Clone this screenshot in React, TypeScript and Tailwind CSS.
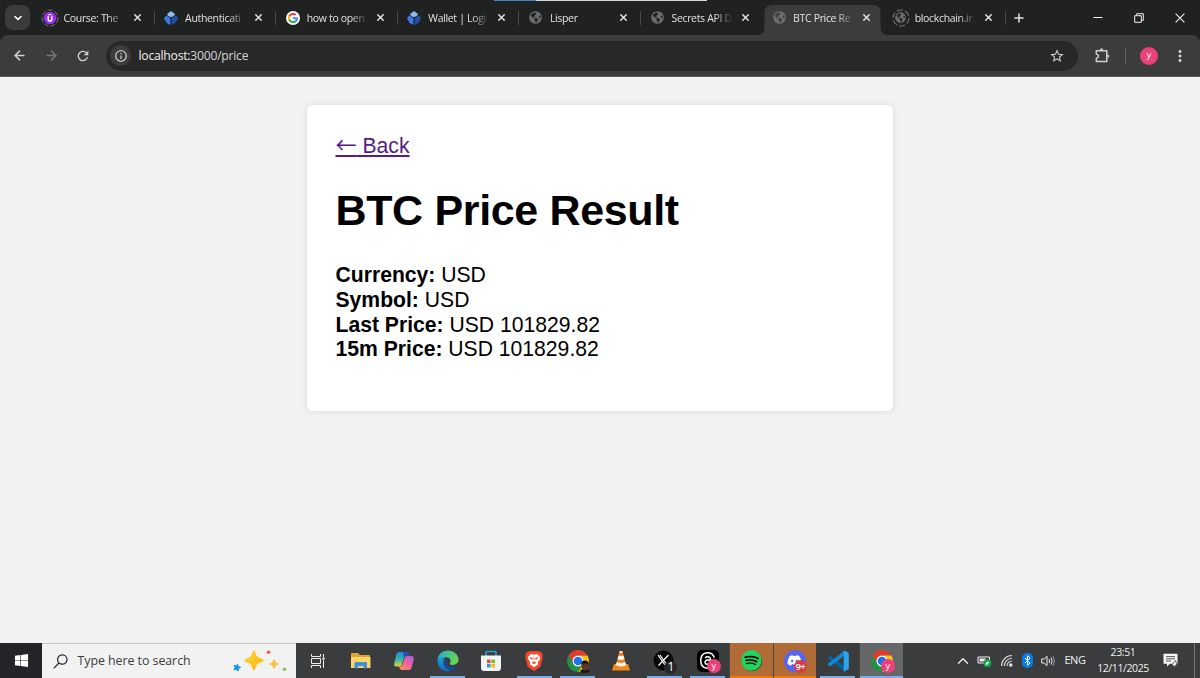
import type { ReactNode } from "react";
import { clsx } from "clsx";
import { ArrowLeft, ArrowRight, ChevronDown, ChevronUp, Plus, X } from "lucide-react";
import { FaDiscord, FaGlobeAmericas, FaSpotify, FaWindows } from "react-icons/fa";
import { MdInfoOutline, MdMoreVert, MdRefresh, MdStarOutline } from "react-icons/md";
import { SiThreads } from "react-icons/si";

const UdemyIcon = () => (
	<svg viewBox="0 0 18 18" className="size-[18px]">
		<circle cx="9" cy="9" r="8" fill="none" stroke="#77767a" strokeWidth="1" strokeDasharray="5 2" />
		<circle cx="9" cy="9" r="6.3" fill="#9b2ff0" />
		<path d="M7.2 7.2v3.1c0 2.4 3.6 2.4 3.6 0V7.2" fill="none" stroke="#fff" strokeWidth="1.5" />
		<path d="M7.1 6.3 9 5.2l1.9 1.1" fill="none" stroke="#fff" strokeWidth="1" />
	</svg>
);

const BlockchainIcon = () => (
	<svg viewBox="0 0 16 16" className="size-4">
		<path d="M4 4 8 .9 12 4l-1.2 2L8 7.2 5.2 6z" fill="#93b8ee" />
		<path d="M3.2 5.2.9 8.6 4 13.200l3.400 1.800V8.300z" fill="#3b78e4" />
		<path d="m12.800 5.200 2.300 3.400-3.100 4.600-3.400 1.800V8.300z" fill="#1f4fa5" />
	</svg>
);

const GoogleIcon = () => (
	<svg viewBox="0 0 48 48" className="size-[14px]">
		<circle cx="24" cy="24" r="24" fill="#fff" />
		<g transform="translate(6.5 6.5) scale(.73)">
			<path fill="#ea4335" d="M24 9.5c3.5 0 6.7 1.2 9.2 3.6l6.9-6.9C35.9 2.4 30.5 0 24 0 14.6 0 6.5 5.4 2.6 13.2l8 6.2C12.4 13.7 17.7 9.5 24 9.5z" />
			<path fill="#4285f4" d="M47 24.6c0-1.6-.2-3.1-.4-4.600H24v9h12.900c-.6 3-2.200 5.500-4.800 7.200l7.700 6c4.500-4.200 7.200-10.400 7.200-17.600z" />
			<path fill="#fbbc05" d="M10.500 28.600c-.5-1.500-.8-3-.8-4.600s.3-3.100.8-4.600l-8-6.200C.9 16.500 0 20.100 0 24s.9 7.500 2.600 10.800z" />
			<path fill="#34a853" d="M24 48c6.500 0 11.900-2.100 15.900-5.800l-7.700-6c-2.200 1.500-4.900 2.300-8.200 2.300-6.300 0-11.600-4.200-13.500-9.900l-8 6.200C6.500 42.600 14.600 48 24 48z" />
		</g>
	</svg>
);

const Globe = () => <FaGlobeAmericas className="size-[13px] text-[#6b6c6d]" />;

const LoadingGlobe = () => (
	<span className="relative flex size-[18px] items-center justify-center">
		<FaGlobeAmericas className="size-[11px] text-[#6b6c6d]" />
		<svg viewBox="0 0 18 18" className="absolute inset-0 size-[18px]">
			<circle cx="9" cy="9" r="8" fill="none" stroke="#707172" strokeWidth="1.2" strokeDasharray="6 2.3" />
		</svg>
	</span>
);

const tabs = [
	{ title: "Course: The", icon: <UdemyIcon /> },
	{ title: "Authenticati", icon: <BlockchainIcon /> },
	{ title: "how to open", icon: <GoogleIcon /> },
	{ title: "Wallet | Logi", icon: <BlockchainIcon /> },
	{ title: "Lisper", icon: <Globe /> },
	{ title: "Secrets API D", icon: <Globe /> },
	{ title: "BTC Price Re", icon: <Globe />, active: true },
	{ title: "blockchain.ir", icon: <LoadingGlobe /> },
];

const Tab = ({ title, icon, active, divider }: { title: string; icon: ReactNode; active?: boolean; divider: boolean }) => (
	<div className="relative flex h-[35px] w-[121.600px] shrink-0 items-center pl-[7.500px]">
		{active && (
			<svg className="absolute top-[5px] -left-[6px] h-[30px] w-[132px]" viewBox="0 0 132 30">
				<path d="M0 30Q7.500 30 7.500 22V8Q7.500 0 15.500 0H115.500Q123.500 0 123.500 8V22Q123.500 30 131.500 30Z" fill="#3c3c3c" />
			</svg>
		)}
		<span className="relative flex w-[18px] justify-center">{icon}</span>
		<span className="mt-[2px] ml-[5px] w-[62px] text-[10.500px] tracking-[-0.330px] whitespace-nowrap text-[#dfe1e1] [mask-image:linear-gradient(to_right,black_70%,transparent_100%)]">
			{title}
		</span>
		<X className="relative ml-[6.200px] size-[11px] text-[#e0e1e1]" strokeWidth={3.2} />
		{divider && <span className="absolute right-0 h-[14px] w-px bg-[#484b4a]" />}
	</div>
);

const TabStrip = () => (
	<div className="relative flex h-[35px] items-center bg-[#1f2221]">
		<div className="absolute top-0 left-[494px] flex h-px w-[213px] bg-[#d5dcda]">
			<span className="w-[42px] bg-[#3d82c4]" />
		</div>
		<button className="ml-[5px] flex h-[25px] w-[25px] items-center justify-center rounded-[8px] bg-[#3a3c3b]">
			<ChevronDown className="size-[12px] text-white" strokeWidth={3.2} />
		</button>
		<div className="ml-[3px] flex">
			{tabs.map((tab, i) => (
				<Tab key={tab.title} {...tab} divider={i !== 5 && i !== 6} />
			))}
		</div>
		<Plus className="ml-[6.500px] size-[14px] text-[#e0e1e1]" strokeWidth={2.6} />
		<div className="ml-auto flex items-center text-[#f0f0f0]">
			<svg viewBox="0 0 10 10" className="mr-[31px] size-[10px]">
				<path d="M.5 4.500h9" stroke="currentColor" />
			</svg>
			<svg viewBox="0 0 10 10" className="mr-[31px] size-[10px]" fill="none" stroke="currentColor">
				<path d="M.7 2.700h6.600v6.600H.7z" />
				<path d="M2.700 2.400V.7h6.600v6.600H7.500" />
			</svg>
			<svg viewBox="0 0 10 10" className="mr-[15px] size-[10px]" stroke="currentColor" strokeWidth="1.1">
				<path d="m.6.6 8.800 8.800M9.400.6.6 9.400" />
			</svg>
		</div>
	</div>
);

const Toolbar = () => (
	<div className="bg-[#1f2221]">
		<div className="flex h-[42px] items-center rounded-t-[8px] border-b border-[#5a5a5a] bg-[#3c3c3c] text-[#cfcfcf]">
			<ArrowLeft className="ml-[12px] size-[15px]" strokeWidth={2.3} />
			<ArrowRight className="ml-[17px] size-[15px] text-[#777]" strokeWidth={2.3} />
			<MdRefresh className="ml-[16px] size-[16px]" />
			<div className="ml-[15px] flex h-[30px] w-[972px] items-center rounded-full bg-[#282828]">
				<span className="ml-[4px] flex size-[21px] items-center justify-center rounded-full bg-[#3c3c3c]">
					<MdInfoOutline className="size-[14px] text-[#d8d8d8]" />
				</span>
				<span className="mt-px ml-[7.500px] text-[12.200px] tracking-[-0.250px] text-[#d3d4d5]">
					<span className="text-[#eee]">localhost:</span>3000/price
				</span>
				<MdStarOutline className="mr-[13px] ml-auto size-[16px]" />
			</div>
			<svg viewBox="0 0 17 17" className="ml-[15.500px] size-[17px]" fill="none" stroke="currentColor" strokeWidth="1.5">
				<path d="M2.300 3.700h10.500v10.800H2.300v-3.200q2.200-.5 2.200-2.200T2.300 6.900z" strokeLinejoin="round" />
				<path d="M6 3.200q0-2 1.600-2t1.600 2zM13.300 7.500q2 0 2 1.600t-2 1.600z" fill="currentColor" stroke="none" />
			</svg>
			<span className="ml-[14px] h-[14px] w-px bg-[#646464]" />
			<span className="ml-[14.500px] flex size-[18px] items-center justify-center rounded-full bg-[#ec407a] text-[9.500px] text-white">
				y
			</span>
			<MdMoreVert className="ml-[13px] size-[18px]" />
		</div>
	</div>
);

const prices = [
	["Currency", "USD"],
	["Symbol", "USD"],
	["Last Price", "USD 101829.82"],
	["15m Price", "USD 101829.82"],
];

const PricePage = () => (
	<main className="flex-1 bg-[#f2f2f2] pt-[28px] font-['Liberation_Sans',Arial,sans-serif] text-[21.150px] leading-[24.700px] text-black">
		<div className="mx-auto h-[306px] w-[586px] rounded-[6px] bg-white px-[28.500px] pt-[28px] shadow-[0_0_7px_rgba(0,0,0,0.1)]">
			<a href="#" className="text-[#551a8b] underline">
				<span className="font-['Noto_Sans_CJK_JP',sans-serif] leading-none">←</span> Back
			</a>
			<h1 className="mt-[27px] text-[43px] leading-[49px] font-bold tracking-[-0.350px]">BTC Price Result</h1>
			<div className="mt-[28.500px]">
				{prices.map(([label, value]) => (
					<p key={label}>
						<strong>{label}:</strong> {value}
					</p>
				))}
			</div>
		</div>
	</main>
);

const Sparkles = () => (
	<svg viewBox="0 0 56 24" className="h-6 w-14">
		<defs>
			<linearGradient id="gold" x2="1" y2="1">
				<stop stopColor="#ffd64a" />
				<stop offset="1" stopColor="#f7b500" />
			</linearGradient>
		</defs>
		<path d="M22 1.500c1.500 0 2 4.500 3.200 5.900s6.500 2.400 6.500 4.100-5 2.200-6.500 3.800-1.700 5.900-3.200 5.900-2-4.400-3.400-5.900-6.500-2.100-6.500-3.800 5.100-2.600 6.500-4.100S20.500 1.500 22 1.500z" fill="url(#gold)" />
		<path d="m42 11 1.200 2.800L46 15l-2.800 1.200L42 19l-1.200-2.800L38 15l2.800-1.200z" fill="#fcc33c" stroke="#fcc33c" strokeWidth="1.300" strokeLinejoin="round" />
		<path d="m5.500 15.200.8 2.500 2.400.6-2.200 1.300-.3 2.500-1.800-1.600-2.500.300 1.200-2.200-1-2 2.400.3z" fill="#1597e5" stroke="#1597e5" strokeLinejoin="round" />
		<circle cx="36.500" cy="3.300" r="1.800" fill="#ef5a4c" />
		<circle cx="52.500" cy="20.300" r="1.800" fill="#8dbb60" />
	</svg>
);

const TaskViewIcon = () => (
	<svg viewBox="0 0 16 16" className="size-4" fill="none" stroke="#eee">
		<path d="M1.500 1v2.500h9V1M1.500 15v-2.500h9V15M1.500 5.500h9v5h-9zM13.500 1v3M13.500 7v8" />
		<path d="M12.300 5.500h2.400" strokeWidth="2" />
	</svg>
);

const ExplorerIcon = () => (
	<svg viewBox="0 0 20 18" className="h-[18px] w-5">
		<path d="M0 2a1 1 0 0 1 1-1h6l2 2h9a1 1 0 0 1 1 1v3H0z" fill="#e0a52c" />
		<path d="M0 5h19.500v11H0z" fill="#fbd56c" />
		<path d="M3.500 16.500V11q0-1 1-1h10.500q1 0 1 1v5.500h-3.500V14H7v2.500z" fill="#3f91d4" />
	</svg>
);

const CopilotIcon = () => (
	<svg viewBox="0 0 22 20" className="h-5 w-[22px]">
		<defs>
			<linearGradient id="copilot-left" x2="0" y2="1">
				<stop stopColor="#1f8de2" />
				<stop offset=".5" stopColor="#32b5a5" />
				<stop offset="1" stopColor="#e6d136" />
			</linearGradient>
			<linearGradient id="copilot-right" x1="1" x2="0" y2="1">
				<stop stopColor="#a55be8" />
				<stop offset=".5" stopColor="#f0649a" />
				<stop offset="1" stopColor="#fa9b4d" />
			</linearGradient>
		</defs>
		<path d="M6 1h7q2 0 2.500 2l.7 2h-2.700q-2 0-2.600 2l-2 6.500q-.6 2-2.600 2H3.500Q.6 15.500 1.300 12L3.500 3Q4 1 6 1z" fill="url(#copilot-left)" />
		<path d="M10 1h3q2 0 2.500 2l.7 2h-2.700q-2 0-2.600 2z" fill="#2450b8" />
		<path d="M16 19H9q-2 0-2.500-2l-.5-1.500h1q2 0 2.600-2l2-6.500q.6-2 2.600-2h4.300q2.900 0 2.200 3.500L18.500 17Q18 19 16 19z" fill="url(#copilot-right)" />
	</svg>
);

const EdgeIcon = () => (
	<svg viewBox="0 0 22 22" className="size-[22px]">
		<defs>
			<linearGradient id="edge-wave" x2="1" y2=".3">
				<stop stopColor="#25a9dc" />
				<stop offset="1" stopColor="#62d652" />
			</linearGradient>
			<linearGradient id="edge-blue" x2="0" y2="1">
				<stop stopColor="#1ba2df" />
				<stop offset="1" stopColor="#1265bb" />
			</linearGradient>
		</defs>
		<path d="M.5 11C.5 4.500 5.500.5 11 .5S21.500 4.500 21.500 9.500c0 4-3.500 5.500-6 5.500-2 0-3-1-2.500-2 1-1.500 1-4-1.500-5.200C8 6 2 7 .5 11z" fill="url(#edge-wave)" />
		<path d="M.5 11C1.500 7 5 6 8.500 7 6.500 8.500 6 11 6.500 13.500 7.500 18 11 20 14 21 7 23 .5 18 .5 11z" fill="url(#edge-blue)" />
		<path d="M8.500 9C5.500 13 8 19.500 14 21c2.800-.8 5-2.500 6.300-4.700-5.300 2.200-11.300-.3-10.300-5z" fill="#144c91" />
	</svg>
);

const StoreIcon = () => (
	<svg viewBox="0 0 22 22" className="size-[22px]">
		<path d="M6 6V2.500q0-1 1-1h8q1 0 1 1V6" fill="none" stroke="#21a3dc" strokeWidth="1.6" />
		<path d="M1 5.500h20V18q0 3-3 3H4q-3 0-3-3z" fill="#f2f3f5" />
		<path d="M7 9.500h3.600v3.600H7z" fill="#ef4e23" />
		<path d="M11.400 9.500H15v3.600h-3.600z" fill="#7db928" />
		<path d="M7 13.900h3.600v3.600H7z" fill="#20a1e5" />
		<path d="M11.400 13.900H15v3.600h-3.600z" fill="#fdb813" />
	</svg>
);

const BraveIcon = () => (
	<svg viewBox="0 0 20 22" className="h-[22px] w-5">
		<path d="m5 1.500 2-.5h6l2 .5 2 .5 1.700 2.500-.5 1.700.5 1.500-2.400 9L10 21.300 3.700 16.700l-2.400-9 .5-1.500-.5-1.700L3 2z" fill="#f4472c" />
		<path d="m7 4 3 .7L13 4l3.200 3-.7 3-1.700 2 .4 2.300-4.200 3-4.200-3L6.200 12l-1.700-2-.7-3z" fill="#fff" />
		<path d="m5.800 7.500 2.800.8-.7 1.300zM14.200 7.500l-2.800.8.7 1.300zM10 6.500v4M8 12.500l2-.7 2 .7-2 1.500z" fill="#f4472c" stroke="#f4472c" strokeWidth=".6" />
	</svg>
);

const ChromeIcon = () => (
	<svg viewBox="0 0 22 22" className="size-[22px]">
		<path d="M1.500 5.500A11 11 0 0 1 20.500 5.500H11A5.500 5.500 0 0 0 6.200 13.700z" fill="#e33b2e" />
		<path d="M20.500 5.500A11 11 0 0 1 11 22l4.800-8.300A5.500 5.500 0 0 0 11 5.500z" fill="#fbc116" />
		<path d="M11 22A11 11 0 0 1 1.500 5.500l4.700 8.200a5.500 5.500 0 0 0 9.600 0z" fill="#229342" />
		<circle cx="11" cy="11" r="5.500" fill="#fff" />
		<circle cx="11" cy="11" r="4.300" fill="#1a73e8" />
	</svg>
);

const ChromePersonIcon = () => (
	<span className="relative">
		<ChromeIcon />
		<svg viewBox="0 0 12 13" className="absolute -right-[2px] -bottom-px h-[13px] w-3">
			<path d="M1 10.500 4 9h4l3 1.500Q10 13 6 13t-5-2.500z" fill="#16181b" />
			<ellipse cx="6" cy="5.800" rx="3.600" ry="4.800" fill="#5b3727" />
			<path d="M2.200 5Q2 .5 6 .5T9.800 5L8 3.400H4z" fill="#17100f" />
		</svg>
	</span>
);

const VlcIcon = () => (
	<svg viewBox="0 0 20 22" className="h-[22px] w-5">
		<path d="M3 14h14l2 6.500H1z" fill="#f28a17" />
		<path d="M8.700 1h2.600l4.200 15.300Q10 19 4.500 16.300z" fill="#f58220" />
		<path d="m7.500 5.500-1 3.800q3.500 1.400 7 0l-1-3.800q-2.500 1-5 0zM5.800 12l-1 3.200q5.200 2.600 10.400 0l-1-3.200q-4.200 1.800-8.400 0z" fill="#f5f3f0" />
		<path d="M8.700 1h2.600l.4 1.800H8.300z" fill="#eee" />
	</svg>
);

const Badge = ({ children, className }: { children: ReactNode; className: string }) => (
	<span className={clsx("absolute flex items-center justify-center rounded-full leading-none text-white", className)}>{children}</span>
);

const XOneIcon = () => (
	<span className="relative size-[22px]">
		<svg viewBox="0 0 22 22" className="size-[22px]">
			<circle cx="10.500" cy="10.500" r="10" fill="#080808" />
			<path d="m5 5 7 10M7 5l7 10M15.500 5 5.500 15.500" stroke="#fff" strokeWidth="1.2" />
		</svg>
		<Badge className="-right-[2px] -bottom-[2px] size-[13px] bg-[#252628] text-[12px]">1</Badge>
	</span>
);

const ThreadsAppIcon = () => (
	<span className="relative flex size-[22px] items-center justify-center rounded-[5px] bg-black">
		<SiThreads className="size-[17px] text-white" />
		<Badge className="-right-[2px] -bottom-[1px] size-[14px] bg-[#ec407a] text-[9px]">y</Badge>
	</span>
);

const SpotifyIcon = () => (
	<span className="flex size-[20px] items-center justify-center rounded-full bg-black">
		<FaSpotify className="size-[21px] shrink-0 text-[#1ed760]" />
	</span>
);

const DiscordAppIcon = () => (
	<span className="relative flex size-[22px] items-center justify-center rounded-full bg-[#5865f2]">
		<FaDiscord className="mr-px size-[15px] text-white" />
		<Badge className="-right-[1px] -bottom-[1px] size-[13px] bg-[#d83c3e] text-[9px] font-semibold tracking-[-0.500px]">9+</Badge>
	</span>
);

const VsCodeIcon = () => (
	<svg viewBox="0 0 22 22" className="size-[22px]">
		<path d="m1 7.200 1.500-1.300q.6-.4 1.300.1L17 16v5L1.100 8.500q-.7-.6-.1-1.300z" fill="#0065a9" />
		<path d="m1 14.800 1.500 1.300q.6.4 1.300-.1L17 6V1L1.100 13.500q-.7.6-.1 1.300z" fill="#1387ce" />
		<path d="M16 .8q.8-.3 1.500 0l3.600 1.700q.7.400.7 1.200v14.600q0 .8-.7 1.200l-3.600 1.700q-.7.300-1.500 0 .7-.3.700-1.200V2q0-.9-.7-1.200z" fill="#27a5ed" />
	</svg>
);

const ChromeProfileIcon = () => (
	<span className="relative">
		<ChromeIcon />
		<Badge className="-right-[2px] -bottom-[1px] size-[14px] bg-[#ec407a] text-[9px]">y</Badge>
	</span>
);

type TaskbarApp = { name: string; icon: ReactNode; cell?: string; line?: string };

const apps: TaskbarApp[] = [
	{ name: "Task View", icon: <TaskViewIcon /> },
	{ name: "File Explorer", icon: <ExplorerIcon /> },
	{ name: "Copilot", icon: <CopilotIcon /> },
	{ name: "Edge", icon: <EdgeIcon />, line: "bg-[#76aeea]" },
	{ name: "Store", icon: <StoreIcon /> },
	{ name: "Brave", icon: <BraveIcon />, line: "bg-[#76aeea]" },
	{ name: "Chrome", icon: <ChromePersonIcon />, line: "bg-[#76aeea]" },
	{ name: "VLC", icon: <VlcIcon /> },
	{ name: "X", icon: <XOneIcon />, line: "bg-[#76aeea]" },
	{ name: "Threads", icon: <ThreadsAppIcon />, line: "bg-[#76aeea]" },
	{ name: "Spotify", icon: <SpotifyIcon />, cell: "bg-[#b16b36]", line: "bg-[#f5760c]" },
	{ name: "Discord", icon: <DiscordAppIcon />, cell: "bg-[#b16b36]", line: "bg-[#f5760c]" },
	{ name: "VS Code", icon: <VsCodeIcon />, line: "bg-[#76aeea]" },
	{ name: "Chrome profile", icon: <ChromeProfileIcon />, cell: "bg-[#666768]", line: "bg-[#76aeea]" },
];

const SystemTray = () => (
	<div className="ml-auto flex h-full items-center text-[#f0f0f0]">
		<ChevronUp className="size-[18px]" strokeWidth={1.7} />
		<svg viewBox="0 0 15 14" className="ml-[5px] h-[14px] w-[15px]">
			<path d="M1 3h11.500v6H1z" fill="none" stroke="#eee" />
			<path d="M2.500 4.500h6v3h-6z" fill="#eee" />
			<circle cx="10.300" cy="9.200" r="4" fill="#16a34a" />
			<path d="M8.500 10.700q0-3.300 3.500-3.300 0 3.700-3.500 3.300z" fill="#dff7e4" />
		</svg>
		<svg viewBox="0 0 14 14" className="ml-[8px] size-[14px]" fill="none" stroke="#ddd" strokeWidth="1.1">
			<path d="M1.500 12A10.500 10.500 0 0 1 12 1.500M4.200 12A8 8 0 0 1 12 4.200M7 12a5 5 0 0 1 5-5" />
			<circle cx="10.800" cy="11" r="1.200" fill="#eee" />
		</svg>
		<svg viewBox="0 0 11 15" className="ml-[8px] h-[15px] w-[11px]">
			<rect width="11" height="15" rx="5" fill="#0a7ce5" />
			<path d="m3 5 5 5-2.500 2.300V2.700L8 5l-5 5" fill="none" stroke="#fff" strokeWidth="1" />
		</svg>
		<svg viewBox="0 0 14 14" className="ml-[8px] size-[14px]" fill="none" stroke="#eee">
			<path d="M.7 5h2.500L6 2.300v9.400L3.200 9H.7z" />
			<path d="M8 5q1.200 2 0 4M10 3.500q2.300 3.500 0 7" />
			<path d="M12 2q3 5 0 10" stroke="#999" />
		</svg>
		<span className="ml-[9.500px] w-[22px] text-[11px] tracking-[-0.500px]">ENG</span>
		<div className="-mt-[2px] ml-[9.500px] w-[54px] text-center text-[10.500px] leading-[16px] tracking-[-0.400px] whitespace-nowrap">
			<p>23:51</p>
			<p>12/11/2025</p>
		</div>
		<svg viewBox="0 0 15 15" className="ml-[13px] size-[15px]">
			<path d="M.5.800h14v10H7L4 13.500v-2.700H.5z" fill="#f4f4f4" />
			<path d="M3 3.600h9M3 5.800h9M3 8h5" stroke="#444648" strokeWidth=".9" />
			<path d="m9.300 11.500 3.200-4q2.200 3.500.2 5.500-2.500 1.200-3.400-1.500z" fill="#eee" stroke="#444648" strokeWidth=".8" />
		</svg>
		<span className="ml-[16px] h-full w-px bg-[#737476]" />
		<span className="w-[5px]" />
	</div>
);

const Taskbar = () => (
	<footer className="flex h-[35px] items-center bg-[#3b3c3e]">
		<div className="flex h-full w-[42px] items-center justify-center bg-[#232427]">
			<FaWindows className="size-[15px] text-white" />
		</div>
		<div className="flex h-full w-[254px] items-center border-t border-[#c5c5c5] bg-[#f2f2f2]">
			<svg viewBox="0 0 15 15" className="ml-[11px] size-[15px]" fill="none" stroke="#222" strokeWidth="1.2">
				<circle cx="9.300" cy="5.500" r="4.700" />
				<path d="M6 9 .7 14.300" />
			</svg>
			<span className="mt-px ml-[9.500px] text-[12.400px] tracking-[-0.050px] whitespace-nowrap text-[#3c3c3c]">Type here to search</span>
			<span className="mr-[8px] ml-auto">
				<Sparkles />
			</span>
		</div>
		{apps.map(({ name, icon, cell, line }) => (
			<div
				key={name}
				className={clsx("relative flex h-full w-[43.350px] shrink-0 items-center justify-center", cell, cell && "border-l border-[#4b4540]")}>
				{icon}
				{line && <span className={clsx("absolute bottom-0 h-[2px]", line, cell ? "inset-x-0" : "inset-x-[4px]")} />}
			</div>
		))}
		<SystemTray />
	</footer>
);

export default function App() {
	return (
		<div className="flex h-[678px] w-[1200px] flex-col overflow-hidden font-['Open_Sans','Noto_Sans',sans-serif]">
			<TabStrip />
			<Toolbar />
			<PricePage />
			<Taskbar />
		</div>
	);
}
